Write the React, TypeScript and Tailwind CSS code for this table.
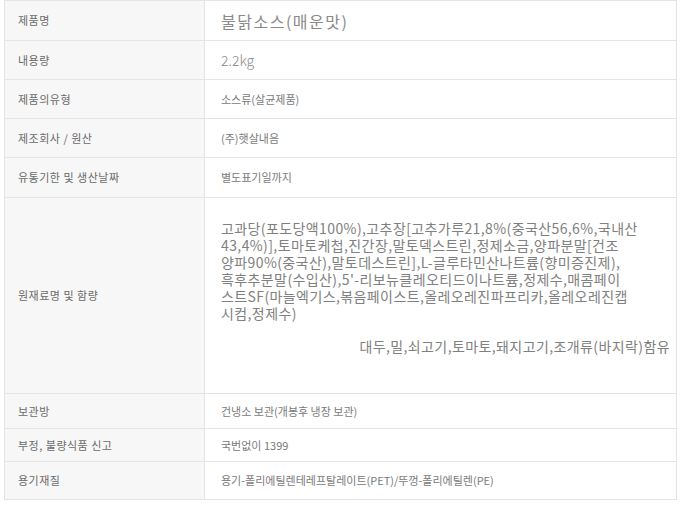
import React from "react";

const font = { fontFamily: '"Noto Sans CJK KR", "Noto Sans", sans-serif' };

const ingredients = [
  "고과당(포도당액100%),고추장[고추가루21,8%(중국산56,6%,국내산",
  "43,4%)],토마토케첩,진간장,말토덱스트린,정제소금,양파분말[건조",
  "양파90%(중국산),말토데스트린],L-글루타민산나트륨(향미증진제),",
  "흑후추분말(수입산),5'-리보뉴클레오티드이나트륨,정제수,매콤페이",
  "스트SF(마늘엑기스,볶음페이스트,올레오레진파프리카,올레오레진캡",
  "시컴,정제수)",
];

type Row = { label: string; value: React.ReactNode; h: string };

const rows: Row[] = [
  {
    label: "제품명",
    h: "h-[40px]",
    value: (
      <span className="text-[16px] tracking-[1.5px] text-[#8a8a8a]">
        불닭소스(매운맛)
      </span>
    ),
  },
  {
    label: "내용량",
    h: "h-[39px]",
    value: <span className="text-[14px] font-light text-[#888]">2.2kg</span>,
  },
  { label: "제품의유형", h: "h-[39px]", value: "소스류(살균제품)" },
  { label: "제조회사 / 원산", h: "h-[39px]", value: "(주)햇살내음" },
  { label: "유통기한 및 생산날짜", h: "h-[40px]", value: "별도표기일까지" },
  {
    label: "원재료명 및 함량",
    h: "h-[196px]",
    value: (
      <div className="pr-[6px] pt-[6px] pb-[22px] text-[14px] leading-[17px] tracking-[0.4px] text-[#808080]">
        {ingredients.map((line) => (
          <div key={line} className="whitespace-nowrap">
            {line}
          </div>
        ))}
        <div className="mt-[16px] text-right whitespace-nowrap">
          대두,밀,쇠고기,토마토,돼지고기,조개류(바지락)함유
        </div>
      </div>
    ),
  },
  { label: "보관방", h: "h-[35px]", value: "건냉소 보관(개봉후 냉장 보관)" },
  { label: "부정, 불량식품 신고", h: "h-[33px]", value: "국번없이 1399" },
  {
    label: "용기재질",
    h: "h-[38px]",
    value: "용기-폴리에틸렌테레프탈레이트(PET)/뚜껑-폴리에틸렌(PE)",
  },
];

export default function App() {
  return (
    <div className="w-[685px] h-[505px] bg-white pl-[4px] pr-[8px]" style={font}>
      <table className="w-[673px] border-collapse table-fixed">
        <colgroup>
          <col className="w-[200px]" />
          <col />
        </colgroup>
        <tbody>
          {rows.map((r) => (
            <tr key={r.label} className={r.h}>
              <td className="border border-[#e4e4e4] bg-[#f7f7f7] pl-[13px] text-[11px] tracking-[0.5px] text-[#6a6a6a] align-middle">
                {r.label}
              </td>
              <td className="border border-[#e4e4e4] bg-white pl-[16px] text-[11px] text-[#7a7a7a] align-middle">
                {r.value}
              </td>
            </tr>
          ))}
        </tbody>
      </table>
    </div>
  );
}
